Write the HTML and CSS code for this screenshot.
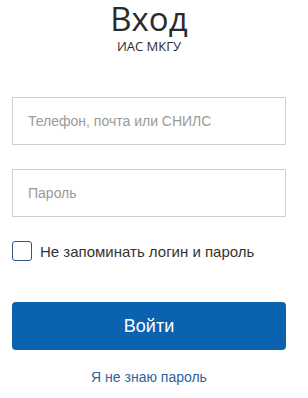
FILE: index.html
```html
<!DOCTYPE html>
<html lang="ru">
<head>
  <meta charset="UTF-8" />
  <meta name="viewport" content="width=device-width, initial-scale=1.0"/>
  <title>Вход</title>
  <link rel="stylesheet" href="styles.css">
</head>
<body>
  <div class="login">
    <div class="login-head">
      <h1>Вход</h1>
      <div class="system">ИАС МКГУ</div>
    </div>
    <form class="login-form" onsubmit="return false">
      <input class="field" type="text" placeholder="Телефон, почта или СНИЛС">
      <input class="field" type="password" placeholder="Пароль">
      <label class="remember">
        <input type="checkbox">
        <span class="box"></span>
        <span>Не запоминать логин и пароль</span>
      </label>
      <button class="submit" type="submit">Войти</button>
      <a class="forgot" href="#">Я не знаю пароль</a>
    </form>
  </div>
</body>
</html>
```

FILE: styles.css
```css
body {
  margin: 0;
  background: #fff;
  font-family: 'Liberation Sans', Arial, sans-serif;
  color: #333;
}

.login {
  width: 274px;
  margin-left: 12px;
}

.login-head {
  text-align: center;
  font-family: 'Open Sans', sans-serif;
  color: #2b2b2b;
}

h1 {
  margin: 0;
  font-size: 33px;
  font-weight: normal;
  line-height: 38px;
}

.system {
  font-size: 13px;
  line-height: 16px;
}

.login-form {
  display: flex;
  flex-direction: column;
  margin-top: 43px;
}

.field {
  box-sizing: border-box;
  height: 48px;
  margin: 0 0 24px;
  padding: 0 15px;
  border: 1px solid #cfcfcf;
  border-radius: 0;
  font-family: inherit;
  font-size: 14px;
  color: #333;
  outline: none;
}

.field::placeholder {
  color: #9a9a9a;
}

.remember {
  display: flex;
  align-items: center;
  gap: 8px;
  height: 20px;
  font-size: 15px;
  color: #333;
  cursor: pointer;
}

.remember input {
  display: none;
}

.box {
  box-sizing: border-box;
  width: 20px;
  height: 20px;
  border: 1px solid #2f5680;
  border-radius: 3px;
}

.submit {
  height: 48px;
  margin-top: 41px;
  border: none;
  border-radius: 4px;
  background-color: #0a62b0;
  color: #fff;
  font-family: inherit;
  font-size: 18px;
  cursor: pointer;
}

.forgot {
  margin-top: 19px;
  text-align: center;
  font-size: 14px;
  line-height: 16px;
  color: #2c63a3;
  text-decoration: none;
}
```
